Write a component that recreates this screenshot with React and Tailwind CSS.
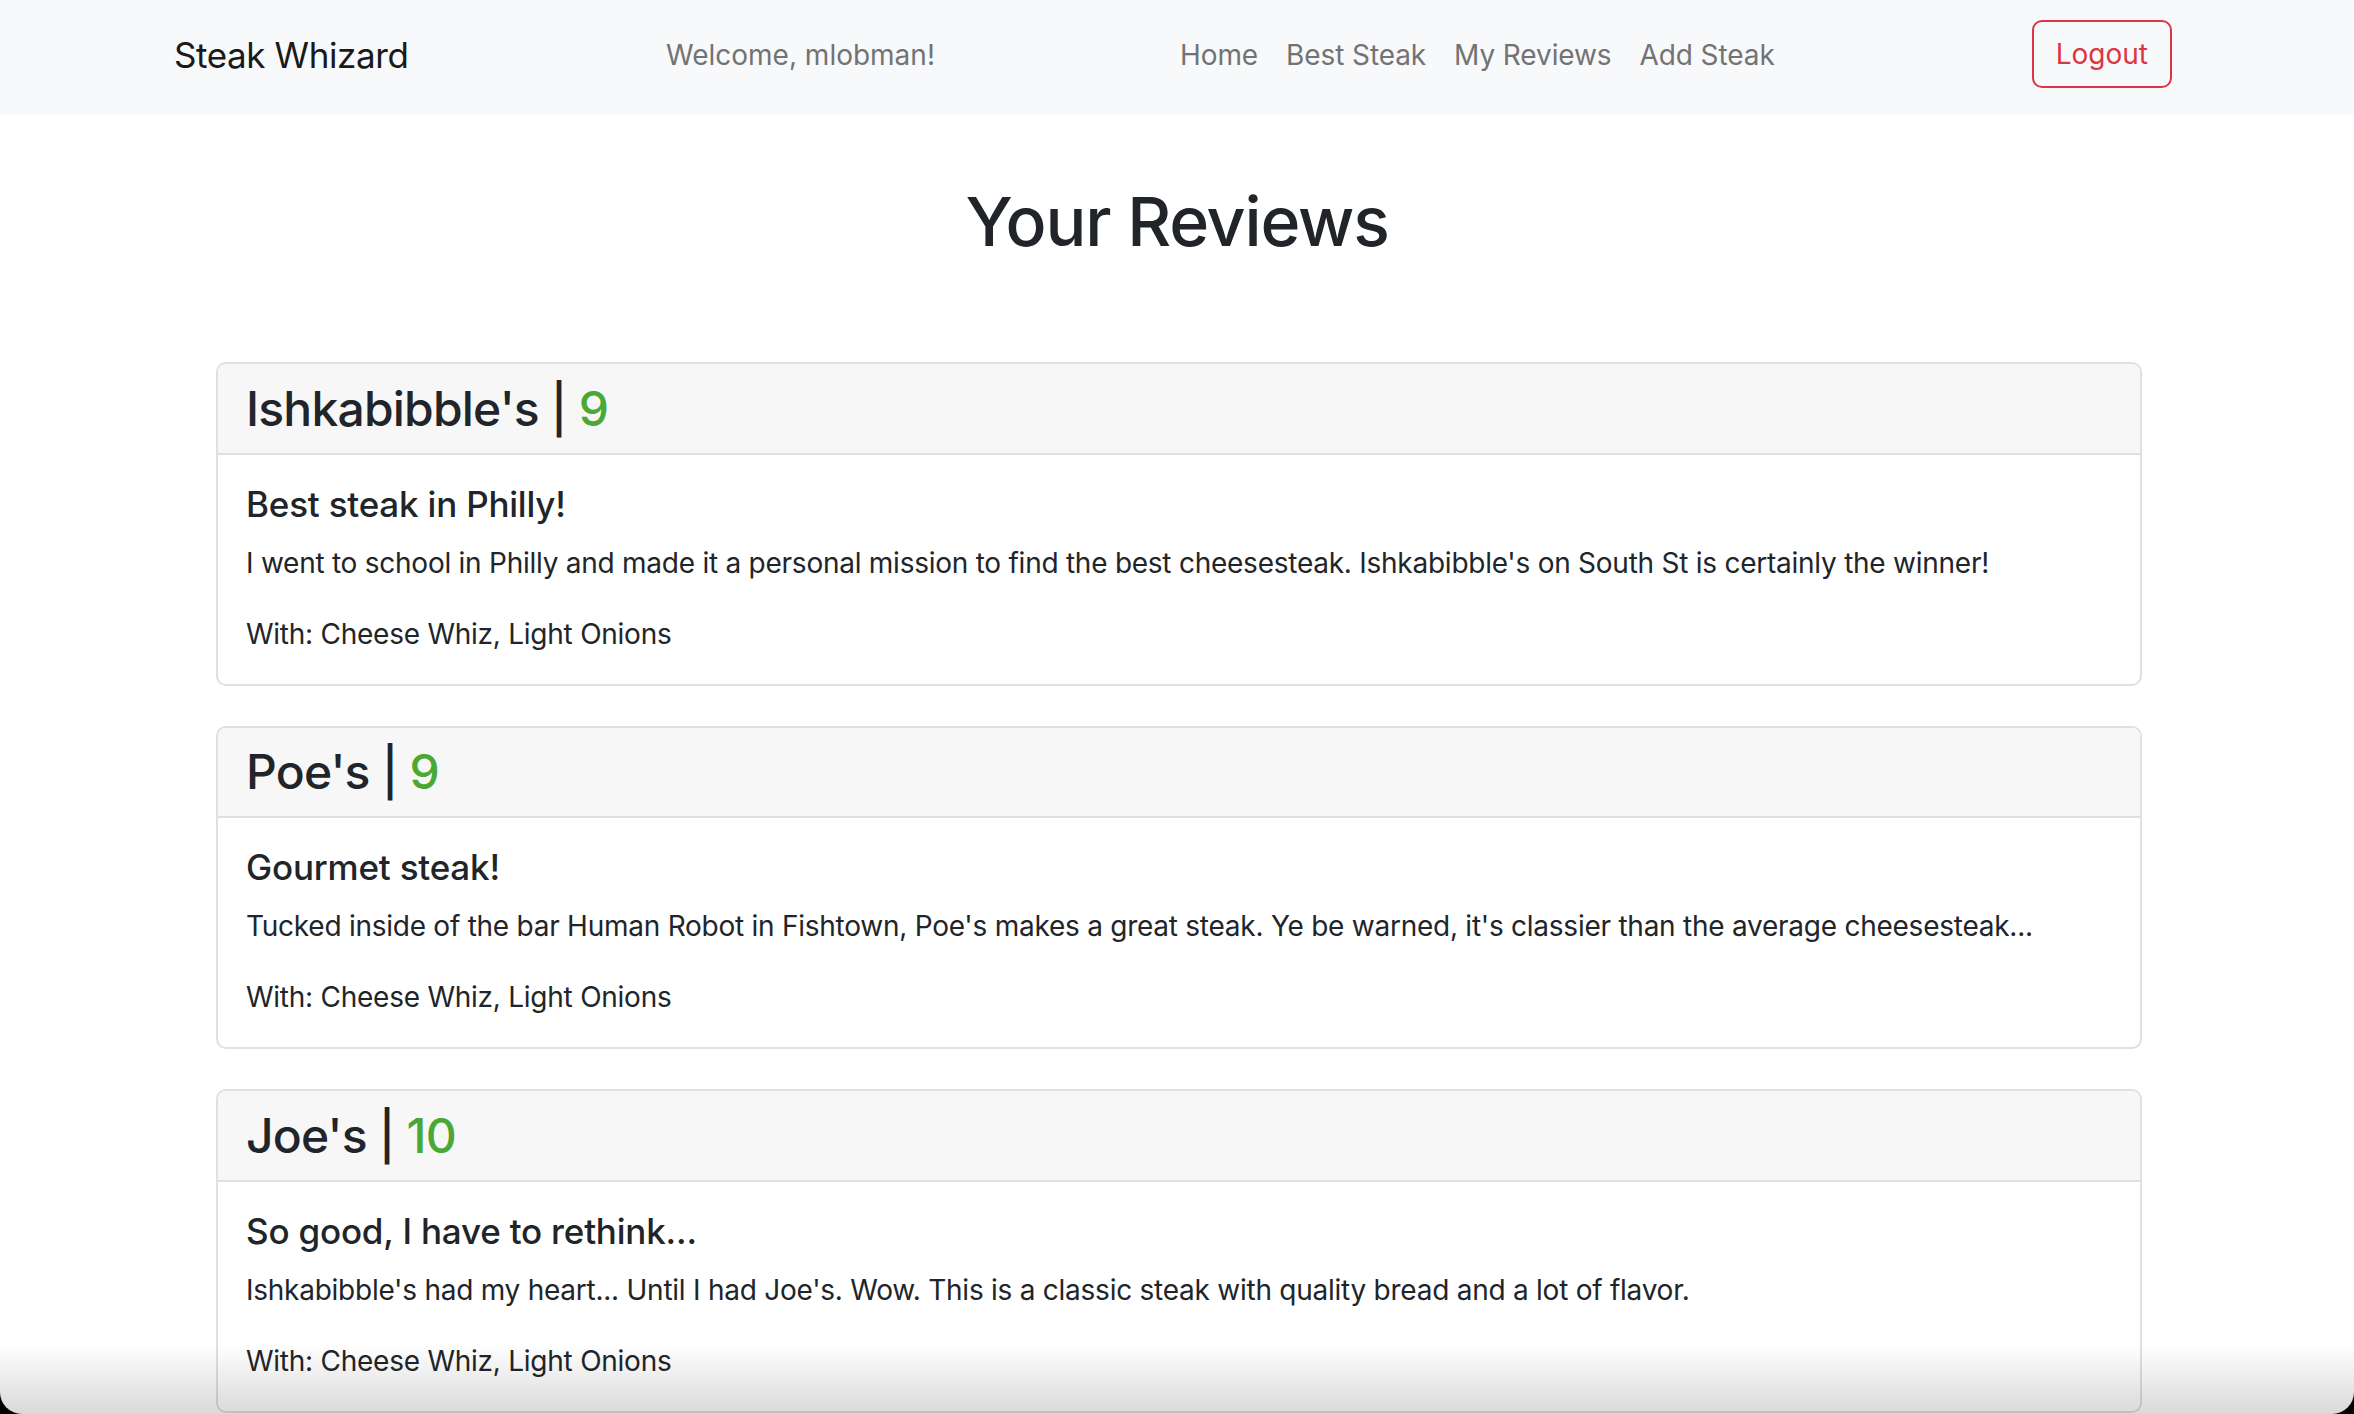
import React from 'react'

const reviews = [
  {
    id: 1,
    place: "Ishkabibble's",
    rating: 9,
    title: 'Best steak in Philly!',
    body: "I went to school in Philly and made it a personal mission to find the best cheesesteak. Ishkabibble's on South St is certainly the winner!",
    toppings: 'Cheese Whiz, Light Onions',
  },
  {
    id: 2,
    place: "Poe's",
    rating: 9,
    title: 'Gourmet steak!',
    body: "Tucked inside of the bar Human Robot in Fishtown, Poe's makes a great steak. Ye be warned, it's classier than the average cheesesteak...",
    toppings: 'Cheese Whiz, Light Onions',
  },
  {
    id: 3,
    place: "Joe's",
    rating: 10,
    title: 'So good, I have to rethink...',
    body: "Ishkabibble's had my heart... Until I had Joe's. Wow. This is a classic steak with quality bread and a lot of flavor.",
    toppings: 'Cheese Whiz, Light Onions',
  },
]

const NavBar = () => (
  <nav className="h-[114px] bg-[#f8f9fa] flex items-center pb-[4px] pl-[174px] pr-[182px]">
    <a className="w-[492px] text-[35px] leading-[42px] tracking-[-0.4px] text-[#1a1a1a]">Steak Whizard</a>
    <span className="w-[500px] text-[28px] leading-[42px] text-[#737373]">Welcome, mlobman!</span>
    <ul className="flex items-center">
      {['Home', 'Best Steak', 'My Reviews', 'Add Steak'].map((link) => (
        <li key={link} className="px-[14px] text-[28px] leading-[42px] tracking-[-0.1px] text-[#737373]">
          {link}
        </li>
      ))}
    </ul>
    <button className="ml-auto mb-[2px] h-[68px] px-[22px] border-2 border-[#dc3545] rounded-[10px] text-[28px] leading-[42px] text-[#dc3545]">
      Logout
    </button>
  </nav>
)

const ReviewCard = ({ review }) => (
  <div className="mb-[40px] border-2 border-[#e0e0e0] rounded-[10px] overflow-hidden bg-white">
    <div className="bg-[#f7f7f7] border-b-2 border-[#e0e0e0] px-[28px] py-[15.5px]">
      <h3 className="text-[48px] leading-[1.2] font-medium tracking-[-0.8px] text-[#212529]">
        {review.place} | <span className="text-[#4aa834]">{review.rating}</span>
      </h3>
    </div>
    <div className="px-[28px] pt-[28px] pb-[29px]">
      <h5 className="text-[35px] leading-[42px] font-medium tracking-[-0.2px] text-[#212529] mb-[17px]">{review.title}</h5>
      <p className="text-[28px] leading-[42px] tracking-[-0.25px] text-[#212529] mb-[29px]">{review.body}</p>
      <p className="text-[28px] leading-[42px] tracking-[-0.25px] text-[#212529]">With: {review.toppings}</p>
    </div>
  </div>
)

export default function App() {
  return (
    <div className="h-[1414px] w-[2354px] bg-black overflow-hidden" style={{ fontFamily: 'Inter, "Noto Sans", sans-serif' }}>
      <div className="relative h-full bg-white rounded-b-[22px] overflow-hidden">
        <NavBar />
        <h1 className="mt-[65px] text-center text-[68px] leading-[84px] font-medium tracking-[-1.2px] text-[#212529]">Your Reviews</h1>
        <div className="ml-[216px] w-[1926px] mt-[99px]">
          {reviews.map((r) => (
            <ReviewCard key={r.id} review={r} />
          ))}
        </div>
        {/* window shadow at the bottom of the screenshot */}
        <div className="pointer-events-none absolute inset-x-0 bottom-0 h-[70px] bg-linear-to-b from-black/0 to-black/15" />
      </div>
    </div>
  )
}
